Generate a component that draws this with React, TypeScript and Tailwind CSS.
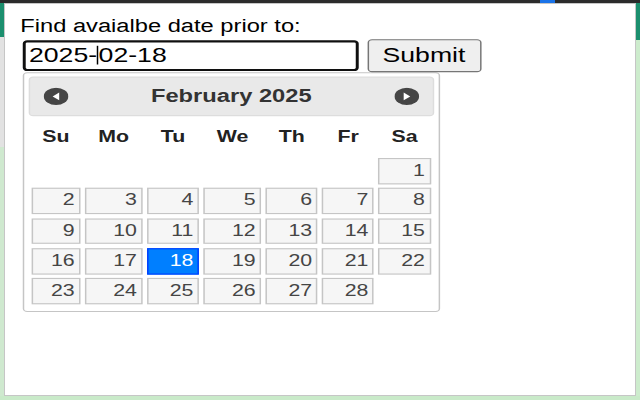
import React from "react"

const dayNames = ["Su", "Mo", "Tu", "We", "Th", "Fr", "Sa"]

const weeks: (number | null)[][] = [
  [null, null, null, null, null, null, 1],
  [2, 3, 4, 5, 6, 7, 8],
  [9, 10, 11, 12, 13, 14, 15],
  [16, 17, 18, 19, 20, 21, 22],
  [23, 24, 25, 26, 27, 28, null],
]

const selectedDay = 18

function CircleArrow({ dir }: { dir: "prev" | "next" }) {
  return (
    <svg width="17" height="16" viewBox="0 0 16 16" preserveAspectRatio="none">
      <circle cx="8" cy="8" r="7.8" fill="#454545" />
      {dir === "prev" ? (
        <polygon points="5.8,8 10,4.4 10,11.6" fill="#fff" />
      ) : (
        <polygon points="10.2,8 6,4.4 6,11.6" fill="#fff" />
      )}
    </svg>
  )
}

function DatePicker() {
  return (
    <div className="w-[282.4px] rounded-[3px] border border-[#c5c5c5] bg-white px-[3px] pt-[3.6px] pb-[6.5px]">
      {/* header */}
      <div className="flex h-[35.4px] items-center rounded-[3px] border border-[#dddddd] bg-[#e9e9e9] pl-[9.6px] pr-[9.2px] text-[#333333]">
        <CircleArrow dir="prev" />
        <div className="flex-1 text-center text-[16px] font-bold">February 2025</div>
        <CircleArrow dir="next" />
      </div>

      {/* day names */}
      <div className="mx-[2.3px] grid h-[38.4px] grid-cols-[33fr_39fr_35fr_39fr_35fr_35fr_35fr] items-center gap-x-[2.95px] text-[14.4px] font-bold text-[#222222]">
        {dayNames.map((d) => (
          <div key={d} className="text-center">
            {d}
          </div>
        ))}
      </div>

      {/* days */}
      <div className="mx-[2.3px] grid grid-cols-[33fr_39fr_35fr_39fr_35fr_35fr_35fr] gap-x-[2.95px] gap-y-[3.7px] text-[14.4px]">
        {weeks.flat().map((day, i) =>
          day === null ? (
            <div key={i} className="h-[23.6px]" />
          ) : (
            <div
              key={i}
              className={
                day === selectedDay
                  ? "h-[23.6px] border border-[#003eff] bg-[#007fff] pr-[2.9px] text-right leading-[20.4px] text-white"
                  : "h-[23.6px] border border-[#c5c5c5] bg-[#f6f6f6] pr-[2.9px] text-right leading-[20.4px] text-[#454545]"
              }
            >
              {day}
            </div>
          )
        )}
      </div>
    </div>
  )
}

export default function App() {
  return (
    <div className="flex h-[400px] w-[640px] flex-col overflow-hidden bg-[#cdeccd]">
      {/* browser strip behind the popup */}
      <div className="flex h-[3px] shrink-0 bg-[#2b2b2b]">
        <div className="ml-[540px] w-[15px] bg-[#1a73e8]" />
      </div>

      <div className="flex flex-1">
        <div className="flex w-[4px] flex-col">
          <div className="h-[34px] bg-[#1b8f6e]" />
          <div className="h-[110px] bg-[#e2e2e2]" />
          <div className="flex-1 bg-[#cfe9cf]" />
        </div>

        <div className="flex-1 overflow-hidden border border-[#c6c6c6] bg-white">
          <div className="w-[427px] origin-top-left scale-x-[1.48] scale-y-[1.1] pt-[11px] pl-[11.5px] font-['Liberation_Sans',Arial,sans-serif] text-black">
            <div className="-ml-[1.2px] text-[16px] leading-[18.4px]">Find avaialbe date prior to:</div>

            <div className="mt-[2.4px] flex h-[30px] items-center">
              <div className="flex h-[28.6px] w-[227px] items-center rounded-[3px] border-2 border-[#101010] pl-[2.7px] text-[18px] leading-none">
                <span>2025-</span>
                <span className="h-[17.3px] w-px bg-black" />
                <span>02-18</span>
              </div>
              <button className="ml-[6.1px] h-[30px] w-[77px] rounded-[3px] border border-[#767676] bg-[#efefef] text-[18px] leading-none text-black">
                Submit
              </button>
            </div>

            <DatePicker />
          </div>
        </div>

        <div className="flex w-[4px] flex-col">
          <div className="h-[37px] bg-[#1b8f6e]" />
          <div className="flex-1 bg-[#cdeccd]" />
        </div>
      </div>

      <div className="h-[4px] shrink-0 bg-[#c9eac9]" />
    </div>
  )
}
